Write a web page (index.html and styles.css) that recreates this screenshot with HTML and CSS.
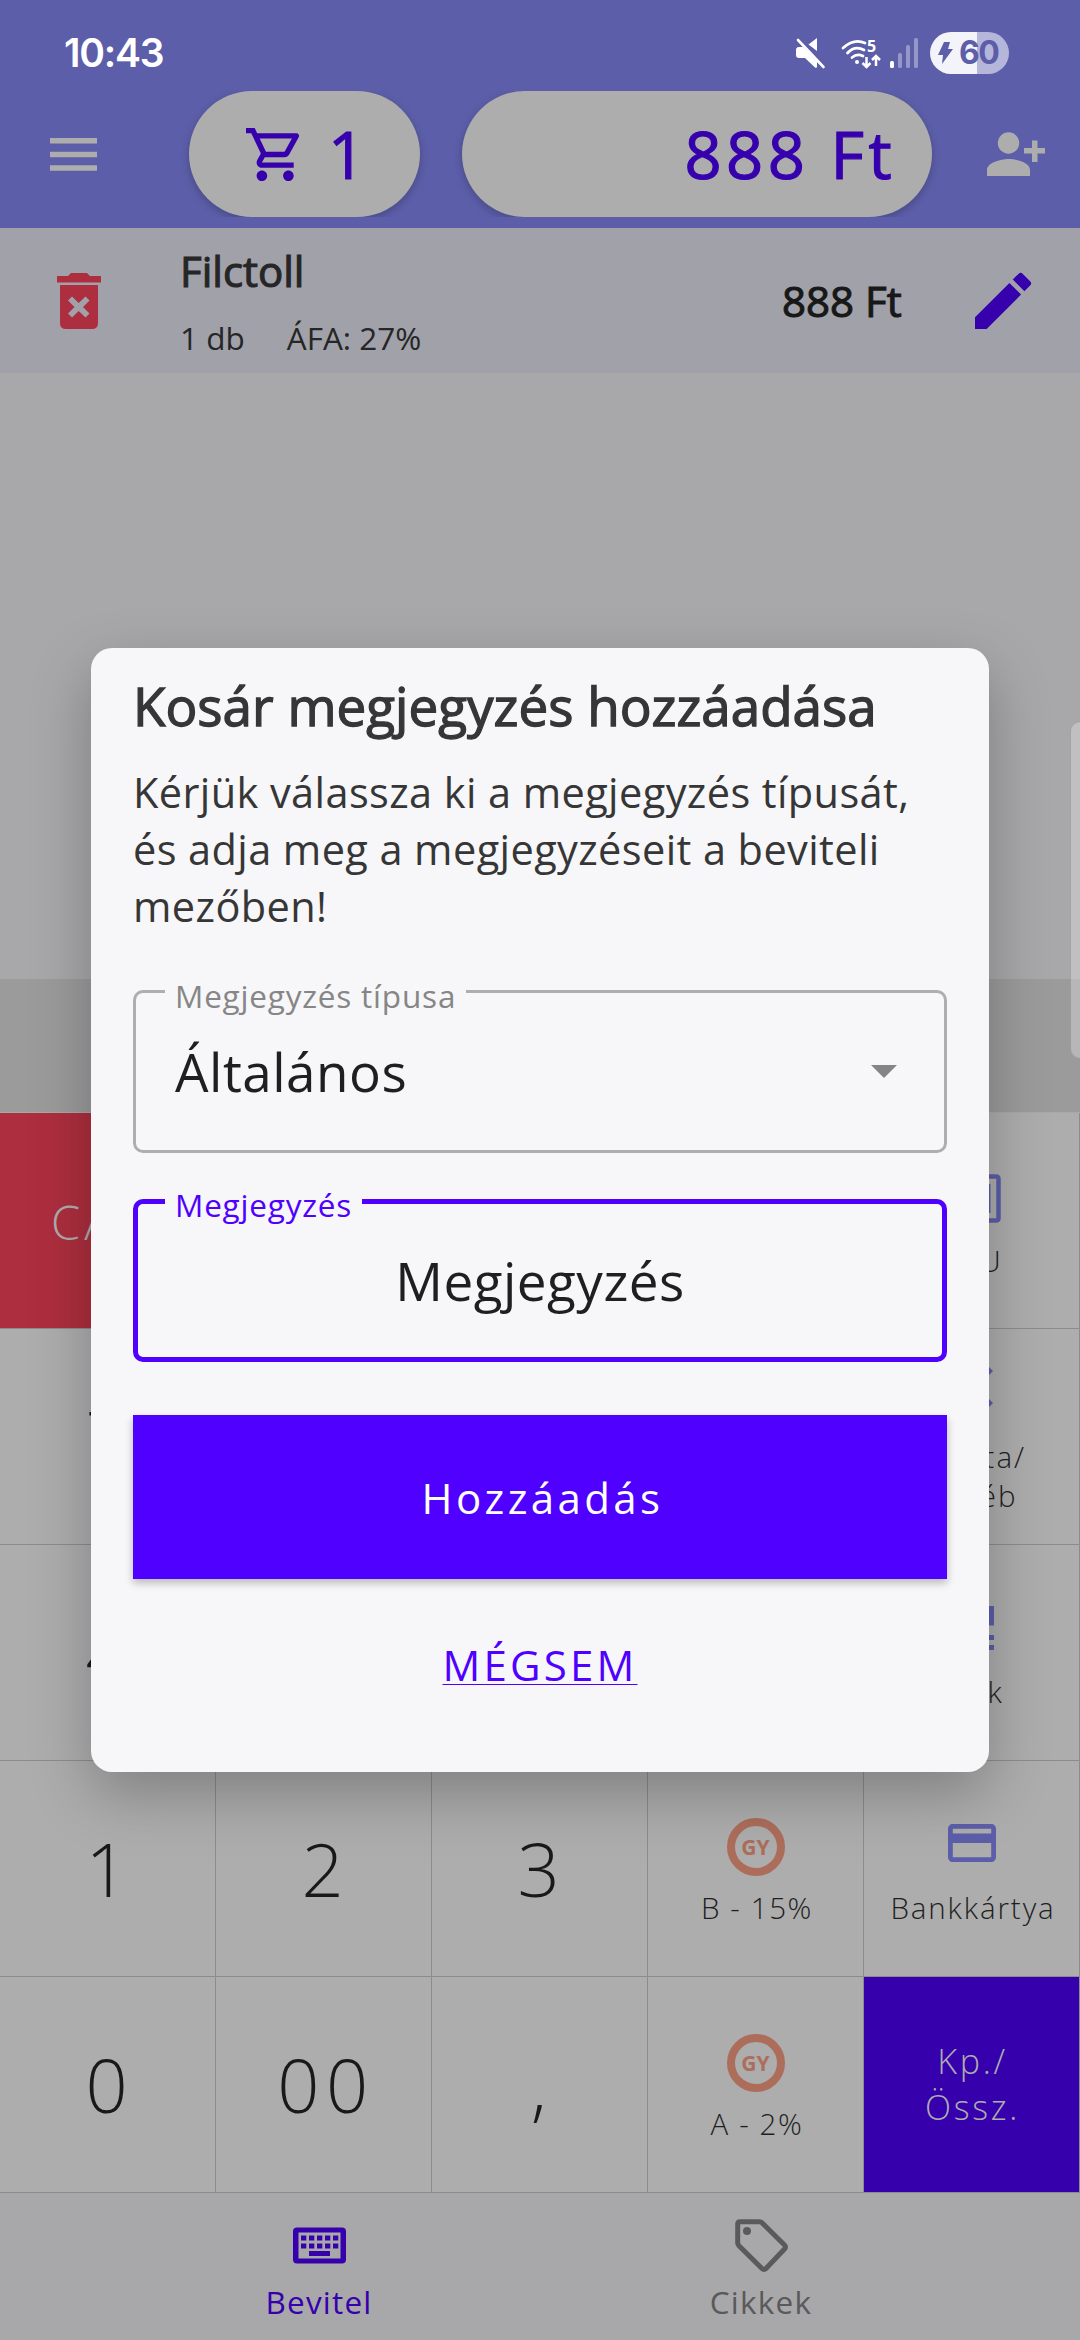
FILE: index.html
```html
<!DOCTYPE html>
<html lang="hu">
<head>
<meta charset="utf-8">
<title>Kosár</title>
<link rel="stylesheet" href="styles.css">
</head>
<body>
<div class="screen">
  <header class="top">
    <div class="status">
      <span class="clock">10:43</span>
      <div class="status-icons">
        <svg class="s-mute" viewBox="0 0 30 32" width="30" height="32"><path d="M22 1v13L13.500 7.500z" fill="#fff"/><path d="M3 3l25.500 27" stroke="#5c5ea9" stroke-width="6"/><path d="M3 3l25.500 27" stroke="#fff" stroke-width="2.600" stroke-linecap="round"/><path d="M1 13q0-3 3-3h4l14 14.500v5q0 2-2 1L10 21H4q-3 0-3-3z" fill="#fff"/></svg>
        <svg class="s-wifi" viewBox="0 0 40 32" width="40" height="32"><g fill="none" stroke="#fff" stroke-width="2.800" stroke-linecap="round"><path d="M2 11Q13 1 24 6"/><path d="M6.500 16Q14 8 23 13"/><path d="M11 20.500Q16 16 22 19"/></g><circle cx="16" cy="25" r="2" fill="#fff"/><text x="26" y="14.500" class="s-five">5</text><path d="M25.500 20v9.500M21.500 26l4 4 4-4M35 29v-9.500M31 23l4-4 4 4" fill="none" stroke="#fff" stroke-width="2.500"/></svg>
        <svg class="s-signal" viewBox="0 0 28 30" width="28" height="30"><rect y="23" width="4" height="7" rx="1.500" fill="#fff"/><g fill="#9597c8"><rect x="8" y="15" width="4" height="15" rx="1.500"/><rect x="16" y="7" width="4" height="23" rx="1.500"/><rect x="24" width="4" height="30" rx="1.500"/></g></svg>
        <div class="battery"><svg viewBox="0 0 15 22" width="15" height="22"><path d="M6 0h6L10 7h5L4 22l1-9H0z" fill="#5c5ea9"/></svg><b>60</b></div>
      </div>
    </div>
    <div class="toolbar">
      <svg class="menu" viewBox="0 0 47 33" width="47" height="33"><path d="M0 0h47v5.500H0zM0 13.700h47v5.500H0zM0 27.300h47v5.500H0z" fill="#adadad"/></svg>
      <div class="pill cart"><svg viewBox="1 2 20 20" width="53" height="53"><path fill="#3600ad" d="M15.550 13c.75 0 1.410-.41 1.750-1.030l3.580-6.490A.996.996 0 0 0 20.010 4H5.210l-.94-2H1v2h2l3.600 7.590-1.350 2.440C4.520 15.370 5.480 17 7 17h12v-2H7l1.100-2h7.450zM6.160 6h12.150l-2.760 5H8.530L6.160 6zM7 18c-1.100 0-1.990.9-1.990 2S5.900 22 7 22s2-.9 2-2-.9-2-2-2zm10 0c-1.100 0-1.990.9-1.990 2s.89 2 1.990 2 2-.9 2-2-.9-2-2-2z"/></svg><span>1</span></div>
      <div class="pill total">888 Ft</div>
      <svg class="person" viewBox="0 0 58 44" width="58" height="44" fill="#adadad"><circle cx="21.500" cy="11" r="10.700"/><path d="M0 44v-6c0-7 13-11 21.500-11S43 31 43 38v6zM45 8.500h5.500V16H58v5.500h-7.500V30H45v-8.500h-8V16h8z"/></svg>
    </div>
  </header>

  <section class="item">
    <svg class="trash" viewBox="0 0 44 56" width="44" height="56"><path fill="#ad2e3e" fill-rule="evenodd" d="M0 3h11l3-3h16l3 3h11v6.500H0zM3 12h38v38q0 6-6 6H9q-6 0-6-6zM15 23.500l-4 4 6.500 6.500-6.500 6.500 4 4 6.700-6.500 6.800 6.500 4-4L26 34l6.500-6.500-4-4-6.800 6.500z"/></svg>
    <div class="item-text">
      <div class="item-name">Filctoll</div>
      <div class="item-meta"><span>1 db</span><span>ÁFA: 27%</span></div>
    </div>
    <div class="item-price">888 Ft</div>
    <svg class="pencil" viewBox="3 3 18 18" width="56" height="56"><path fill="#3600ad" d="M3 17.250V21h3.750L17.810 9.940l-3.750-3.750L3 17.250zM20.710 7.040a.996.996 0 0 0 0-1.410l-2.340-2.340a.996.996 0 0 0-1.410 0l-1.830 1.830 3.750 3.750 1.830-1.830z"/></svg>
  </section>

  <div class="empty"></div>
  <div class="band"></div>

  <main class="keys">
    <div class="key red"><span>CA</span></div><div class="key"></div><div class="key"></div><div class="key"></div>
    <div class="key fn k-plu"><svg viewBox="0 0 58 49" width="58" height="49"><path d="M5 2.500h48q2.500 0 2.500 2.500v39q0 2.500-2.500 2.500H5q-2.500 0-2.500-2.500V5q0-2.500 2.500-2.500zM45.200 10v29M36 10v29M22 10v29M13 10v29" fill="none" stroke="#5c5ea9" stroke-width="4.500"/></svg><span>PLU</span></div>

    <div class="key num">7</div><div class="key"></div><div class="key"></div><div class="key"></div>
    <div class="key fn k-val"><svg viewBox="0 0 42 50" width="42" height="50"><path d="M33 0l9 9-9 9v-6H8V6h25zM33 32l9 9-9 9v-6H8v-6h25z" fill="#5c5ea9"/></svg><span>Valuta/<br>Egyéb</span></div>

    <div class="key num">4</div><div class="key"></div><div class="key"></div><div class="key"></div>
    <div class="key fn k-cikk"><svg viewBox="0 0 44 44" width="44" height="44"><path d="M0 0h19v19H0zM25 0h19v19.500H25zM25 29h19v5H25zM25 39h19v5H25zM0 29h19v5H0zM0 39h19v5H0z" fill="#5c5ea9"/></svg><span>Cikk</span></div>

    <div class="key num">1</div><div class="key num">2</div><div class="key num">3</div>
    <div class="key fn gy"><i>GY</i><span>B - 15%</span></div>
    <div class="key fn k-card"><svg viewBox="2 4 20 16" width="48" height="38" preserveAspectRatio="none"><path fill="#5c5ea9" d="M20 4H4c-1.110 0-1.990.89-1.990 2L2 18c0 1.110.89 2 2 2h16c1.110 0 2-.89 2-2V6c0-1.110-.89-2-2-2zm0 14H4v-6h16v6zm0-10H4V6h16v2z"/></svg><span>Bankkártya</span></div>

    <div class="key num">0</div><div class="key num">00</div><div class="key num">,</div>
    <div class="key fn gy"><i>GY</i><span>A - 2%</span></div>
    <div class="key pay"><span>Kp./<br>Össz.</span></div>
  </main>

  <nav class="nav">
    <div class="tab active"><svg viewBox="0 0 53 36" width="53" height="37"><path fill="#3600ad" fill-rule="evenodd" d="M4 0h45q4 0 4 4v28q0 4-4 4H4q-4 0-4-4V4q0-4 4-4zM5.500 5v26h42V5zM8 8h5.300v5H8zm8 0h5.300v5H16zm8 0h5.300v5H24zm8 0h5.300v5H32zm8 0h5.300v5H40zM8 16h5.300v5H8zm8 0h5.300v5H16zm8 0h5.300v5H24zm8 0h5.300v5H32zm8 0h5.300v5H40zM16 23.500h21v5H16z"/></svg><span>Bevitel</span></div>
    <div class="tab"><svg viewBox="0 0 53 53" width="53" height="53"><path d="M5 2.700h19.500q1.500 0 2.500 1L49.500 26q2 2 0 4L31 49.500q-2 2-4 0L3.700 26.500q-1-1-1-2.500V5q0-2.300 2.300-2.300z" fill="none" stroke="#5a5a5a" stroke-width="5"/><circle cx="12" cy="12" r="4" fill="#5a5a5a"/></svg><span>Cikkek</span></div>
  </nav>

  <div class="edge-handle"></div>

  <div class="dialog">
    <h1>Kosár megjegyzés hozzáadása</h1>
    <p>Kérjük válassza ki a megjegyzés típusát, és adja meg a megjegyzéseit a beviteli mezőben!</p>
    <div class="field select"><label>Megjegyzés típusa</label><span>Általános</span><svg viewBox="0 0 26 13" width="26" height="13"><path d="M0 0h26L13 13z" fill="#848484"/></svg></div>
    <div class="field focus"><label>Megjegyzés</label><span>Megjegyzés</span></div>
    <div class="submit">Hozzáadás</div>
    <div class="cancel"><span>MÉGSEM</span></div>
  </div>
</div>
</body>
</html>
```
FILE: styles.css
```css
* { box-sizing: border-box; }
body { margin: 0; font-family: "Open Sans", "Noto Sans", sans-serif; color: #1f1f1f; }
.screen { position: relative; width: 1080px; height: 2340px; overflow: hidden; background: #a8a8aa; display: flex; flex-direction: column; }
svg { display: block; flex: none; overflow: visible; }

.top { height: 228px; background: #5c5ea9; flex: none; }
.status { height: 91px; padding: 15px 71px 0 64px; display: flex; justify-content: space-between; align-items: center; }
.clock { color: #fff; font: 600 39px/50px "Inter", sans-serif; letter-spacing: -1.200px; }
.status-icons { display: flex; align-items: center; }
.s-wifi { margin-left: 16px; }
.s-five { font: 700 16px "Open Sans", sans-serif; fill: #fff; }
.s-signal { margin-left: 9px; }
.battery { margin-left: 12px; width: 79px; height: 42px; border-radius: 21px; background: linear-gradient(90deg, #f3f3fa 47px, #b5b6da 47px); display: flex; align-items: center; padding-left: 8px; gap: 6px; }
.battery b { font: 700 32px/42px "Inter", sans-serif; letter-spacing: -1.500px; color: #5c5ea9; }
.toolbar { display: flex; height: 126px; align-items: center; padding-left: 50px; }
.pill { height: 126px; border-radius: 63px; background: #adadad; display: flex; align-items: center; color: #3600ad; font-size: 65px; -webkit-text-stroke: 1.200px #3600ad; letter-spacing: 4.400px; box-shadow: 0 3px 8px rgba(0,0,0,.22); clip-path: inset(0 -12px 0 -12px); }
.cart { width: 231px; margin-left: 92px; padding-left: 57px; gap: 29px; }
.total { width: 470px; margin-left: 42px; justify-content: flex-end; padding-right: 36px; }
.person { margin-left: 55px; }

.item { height: 145px; background: #a1a1aa; display: flex; align-items: center; padding-left: 57px; flex: none; }
.item-text { margin-left: 79px; width: 602px; }
.item-name { font-size: 42px; line-height: 57px; -webkit-text-stroke: 1.100px #262626; color: #262626; }
.item-meta { font-size: 31.500px; line-height: 43px; margin-top: 17px; margin-bottom: 1px; color: #262626; display: flex; gap: 42px; }
.item-price { font-size: 42px; -webkit-text-stroke: 1.100px #181818; color: #181818; width: 120px; white-space: nowrap; }
.pencil { margin-left: 73px; }

.empty { height: 606px; flex: none; }
.band { height: 133px; background: #9b9b9b; flex: none; }
.keys { display: grid; grid-template-columns: repeat(5, 216px); grid-template-rows: repeat(5, 216px); height: 1080px; margin-top: 1px; flex: none; }
.key { background: #adadad; border-right: 1px solid #8c8c8c; border-bottom: 1px solid #8c8c8c; display: flex; align-items: center; justify-content: center; font-weight: 300; }
.num { font-size: 74px; letter-spacing: 6.600px; color: #191919; padding-left: 5px; }
.red { background: #ad2e3e; color: #adadad; font-size: 47px; letter-spacing: 4px; justify-content: flex-start; padding-left: 51px; padding-top: 3px; }
.fn { flex-direction: column; justify-content: flex-start; font-size: 29.500px; line-height: 39px; letter-spacing: 1.600px; text-align: center; }
.fn span { padding-left: 3px; }
.k-plu { padding-top: 61px; }
.k-plu span { margin-top: 18px; }
.k-val { padding-top: 33px; }
.k-val span { margin-top: 25px; letter-spacing: 2px; }
.k-cikk { padding-top: 61px; }
.k-cikk span { margin-top: 22px; letter-spacing: 2px; }
.k-card { padding-top: 63px; }
.k-card span { margin-top: 26px; letter-spacing: 1.900px; }
.gy { padding-top: 57px; }
.gy i { width: 58px; height: 58px; border: 8px solid #ad6d5b; border-radius: 50%; font: 700 21px/42px "Open Sans", sans-serif; letter-spacing: 0; color: #ad6d5b; }
.gy span { margin-top: 12px; }
.pay { background: #3600ad; color: #adadad; font-size: 34px; line-height: 46px; letter-spacing: 2.700px; text-align: center; padding: 0 0 2px 2px; }

.nav { height: 147px; display: flex; justify-content: center; flex: none; padding-top: 26px; }
.tab { width: 442px; display: flex; flex-direction: column; align-items: center; color: #5a5a5a; font-size: 31.500px; line-height: 43px; letter-spacing: 1.200px; }
.tab.active { color: #3600ad; }
.tab.active svg { margin: 8px 0; }
.tab span { margin-top: 8px; }

.edge-handle { position: absolute; left: 1070px; top: 721px; width: 20px; height: 338px; border-radius: 10px; background: rgba(255,255,255,.28); border: 1px solid rgba(120,120,120,.4); }

.dialog { position: absolute; left: 91px; top: 648px; width: 898px; height: 1124px; border-radius: 21px; background: #f7f7fa; padding: 20px 42px 0; box-shadow: 0 22px 60px rgba(0,0,0,.26); }
h1 { margin: 0; font-size: 53px; line-height: 75px; font-weight: 400; -webkit-text-stroke: 1.300px #363636; color: #363636; white-space: nowrap; }
p { margin: 21px 0 0; font-size: 41.500px; line-height: 57px; letter-spacing: 0.400px; color: #363636; }
.field { position: relative; height: 163px; border: 3px solid #aeaeb0; border-radius: 10px; display: flex; align-items: center; font-size: 53px; letter-spacing: 0.500px; color: #1f1f1f; }
.field label { position: absolute; top: -19px; background: #f7f7fa; padding: 0 10px; font-size: 31.500px; line-height: 43px; letter-spacing: 0.800px; color: #868686; left: 29px; }
.select { margin-top: 55px; padding: 0 47px 0 39px; justify-content: space-between; }
.focus { margin-top: 46px; border: 5px solid #4f00ff; justify-content: center; }
.focus label { color: #4f00ff; left: 27px; top: -21px; }
.submit { margin-top: 53px; height: 164px; background: #4f00ff; color: #fff; font-size: 42px; letter-spacing: 3.400px; display: flex; align-items: center; justify-content: center; padding-left: 5px; box-shadow: 0 4px 8px rgba(0,0,0,.25); }
.cancel { margin-top: 57px; text-align: center; color: #4f00ff; font-size: 42px; line-height: 57px; letter-spacing: 3.200px; }
.cancel span { text-decoration: underline; text-decoration-thickness: 1px; text-underline-offset: 3px; }
```
